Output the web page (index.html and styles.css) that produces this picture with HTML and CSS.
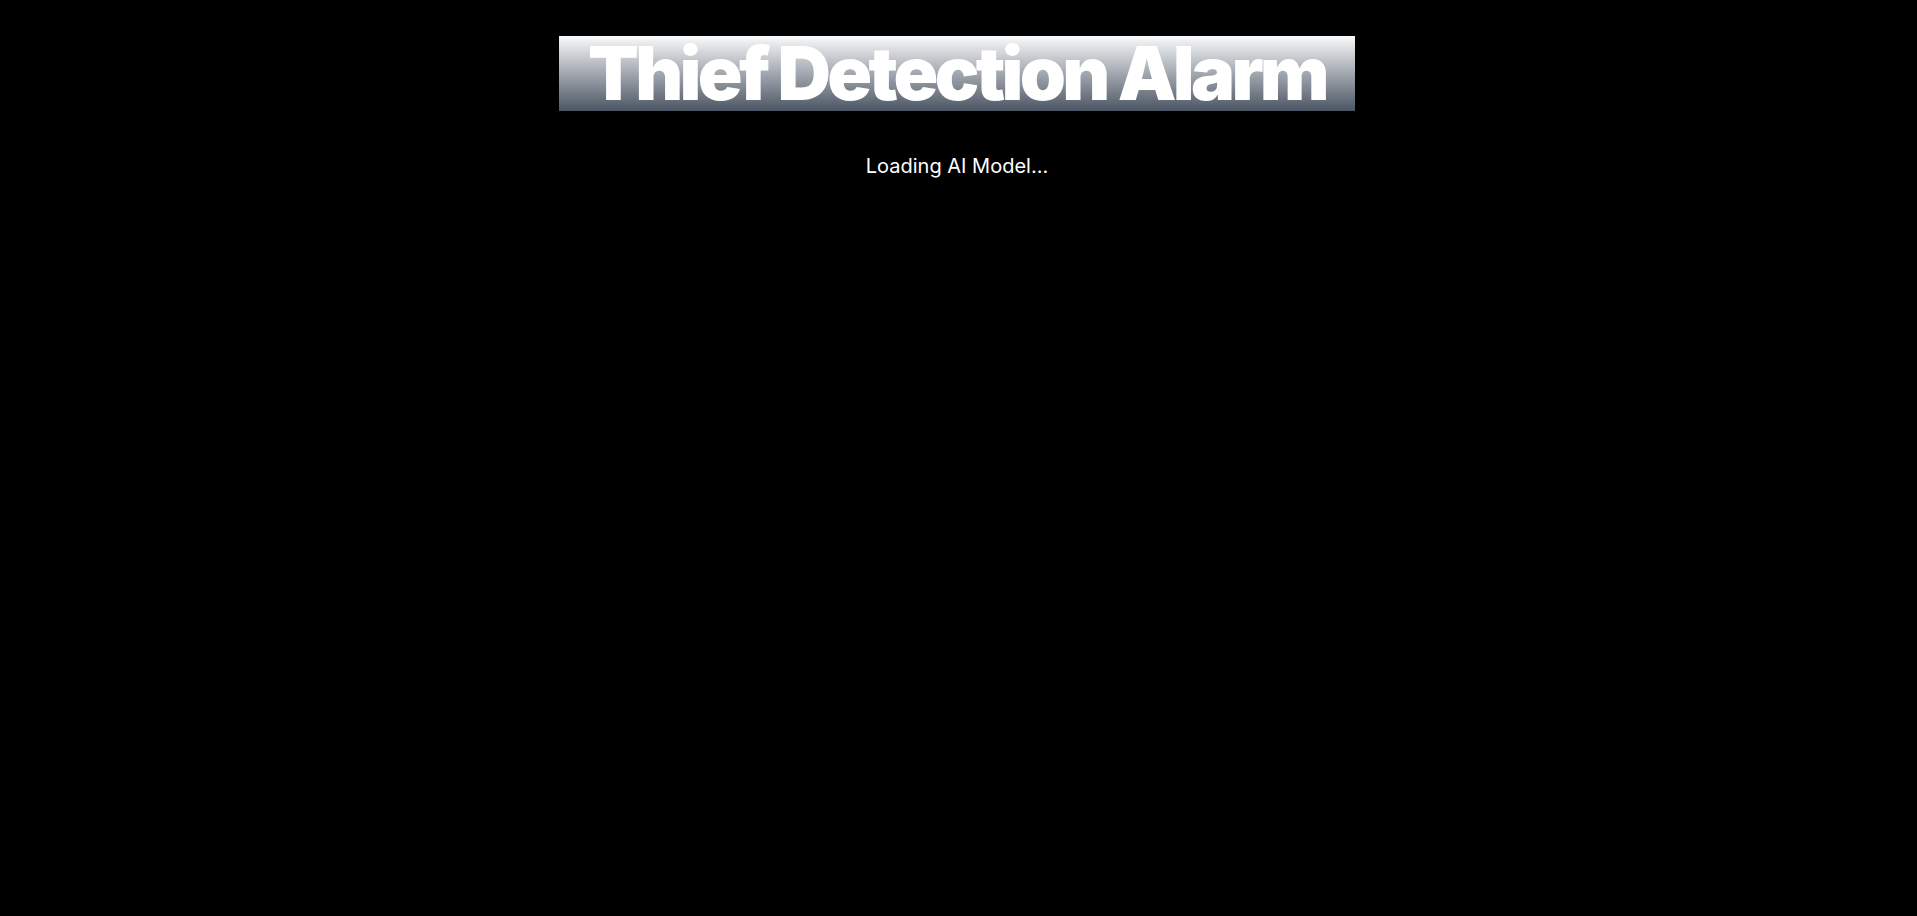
FILE: index.html
```html
<!DOCTYPE html>
<html lang="en">
<head>
<meta charset="utf-8">
<title>Thief Detection Alarm</title>
<link rel="stylesheet" href="styles.css">
</head>
<body>
<main class="page">
  <h1 class="title">Thief Detection Alarm</h1>
  <p class="status">Loading AI Model...</p>
</main>
</body>
</html>
```
FILE: styles.css
```css
html, body {
  margin: 0;
  padding: 0;
  background: #000;
  height: 100%;
}
body {
  font-family: Inter, "Noto Sans", sans-serif;
  color: #fff;
}
.page {
  display: flex;
  flex-direction: column;
  align-items: center;
  padding-top: 36px;
  padding-right: 3px;
}
.title {
  margin: 0;
  width: 796px;
  box-sizing: border-box;
  height: 75px;
  font-size: 74px;
  line-height: 75px;
  font-weight: 900;
  letter-spacing: -0.05em;
  text-align: center;
  white-space: nowrap;
  color: #fff;
  background: linear-gradient(to bottom, #f9fafb, #4b5563);
}
.status {
  margin: 0;
  margin-top: 41px;
  font-size: 20px;
  line-height: 28px;
  color: #fff;
}
```
